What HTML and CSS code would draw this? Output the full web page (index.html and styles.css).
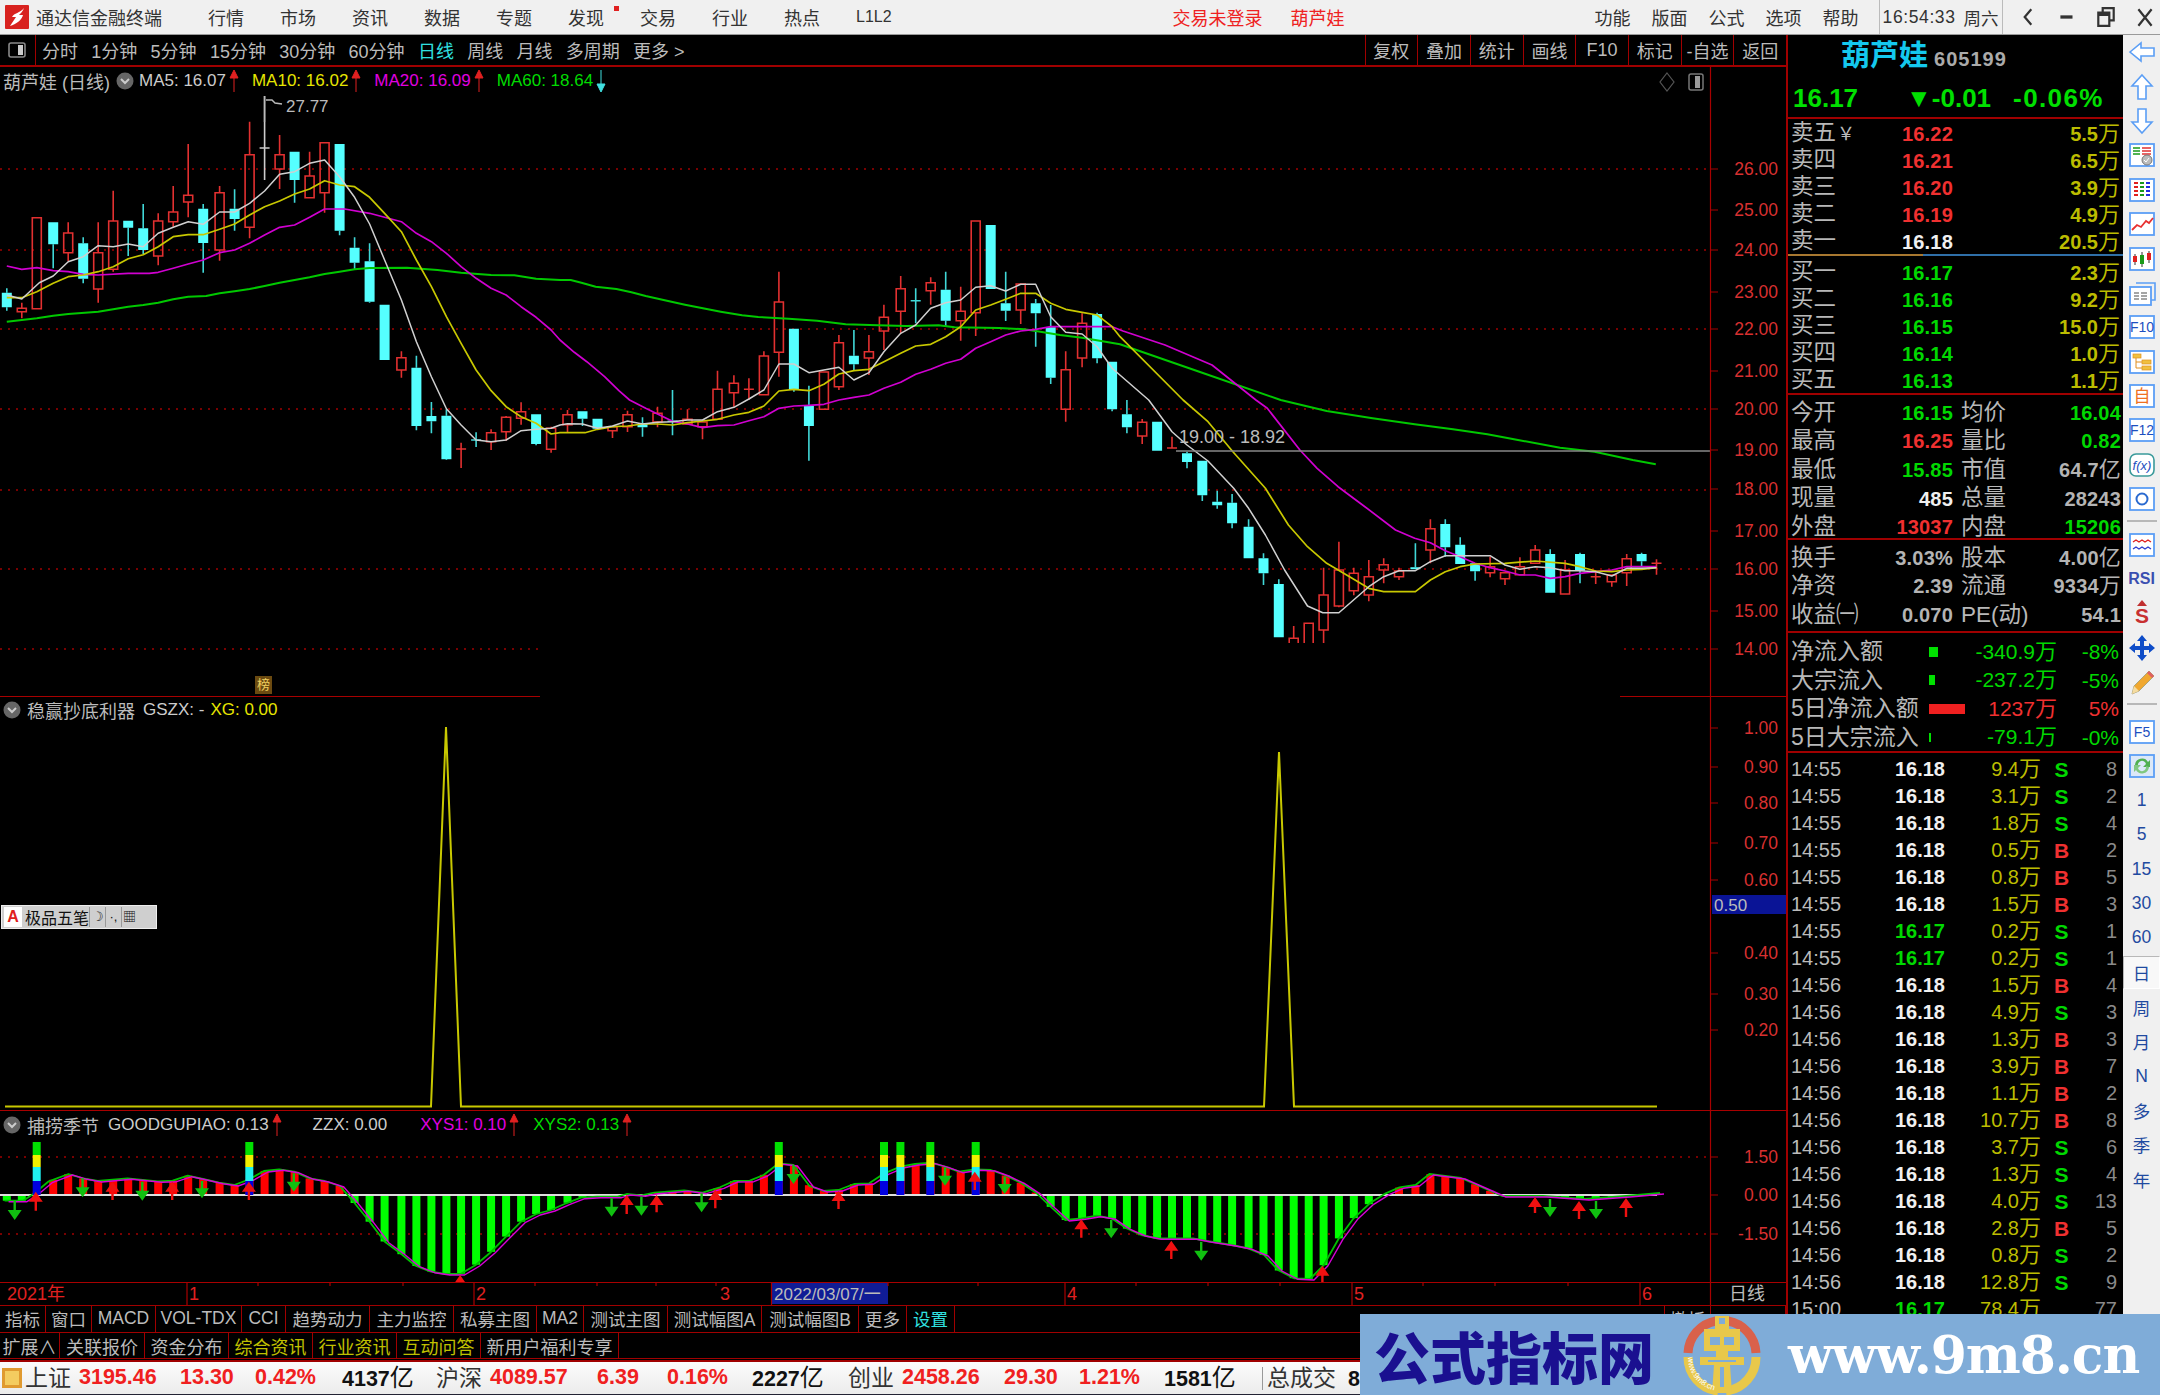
FILE: index.html
```html
<!DOCTYPE html>
<html lang="zh-CN">
<head>
<meta charset="utf-8">
<title>通达信金融终端</title>
<link rel="stylesheet" href="styles.css">
</head>
<body>
<div class="app">
  <header class="topbar">
    <svg class="logo" viewBox="0 0 24 24"><rect width="24" height="24" rx="1" fill="#d8221f"/><path d="M19 3 C15 8 9 8 7 12 L11 12 C9 15 7 18 5 21 C11 19 17 15 18 10 L14 10 C16 8 18 6 19 3Z" fill="#fff"/></svg>
    <span class="title">通达信金融终端</span>
    <nav class="nav">
      <span>行情</span><span>市场</span><span>资讯</span><span>数据</span><span>专题</span><span class="flag">发现</span><span>交易</span><span>行业</span><span>热点</span><span class="lvl">L1L2</span>
    </nav>
    <span class="login">交易未登录</span>
    <span class="login stock">葫芦娃</span>
    <nav class="nav-r">
      <span>功能</span><span>版面</span><span>公式</span><span>选项</span><span>帮助</span>
    </nav>
    <div class="clock"><span>16:54:33</span><span class="wk">周六</span></div>
    <div class="winbtns">
      <svg viewBox="0 0 20 20"><path d="M13 3 L7 10 L13 17" fill="none" stroke="#333" stroke-width="2"/></svg>
      <svg viewBox="0 0 20 20"><path d="M4 10 H15" stroke="#333" stroke-width="3"/></svg>
      <svg viewBox="0 0 20 20"><path d="M7 6 V2 H17 V13 H13 M3 6 H13 V18 H3 Z M3 8 H13" fill="none" stroke="#333" stroke-width="2"/></svg>
      <svg viewBox="0 0 20 20"><path d="M4 3 L16 18 M16 3 L4 18" stroke="#333" stroke-width="2"/></svg>
    </div>
  </header>

  <main class="main">
    <section class="left">
      <div class="toolbar">
        <div class="tool-icon"><svg viewBox="0 0 18 16"><rect x="1" y="1" width="16" height="14" rx="2" fill="none" stroke="#888" stroke-width="1.6"/><rect x="10" y="3" width="5" height="10" fill="#ccc"/></svg></div>
        <div class="periods">
          <span>分时</span><span>1分钟</span><span>5分钟</span><span>15分钟</span><span>30分钟</span><span>60分钟</span><span class="on">日线</span><span>周线</span><span>月线</span><span>多周期</span><span>更多 &gt;</span>
        </div>
        <div class="tools">
          <span>复权</span><span>叠加</span><span>统计</span><span>画线</span><span>F10</span><span>标记</span><span>-自选</span><span>返回</span>
        </div>
      </div>

      <div class="pane pane-k">
        <svg class="chart" viewBox="0 67 1786 630" width="1786" height="630">
          <path class="grid" d="M0 169H1710M0 250H1710M0 329H1710M0 409H1710M0 490H1710M0 569H1710M0 649H1710"/>
          <g id="candles"></g>
          <g id="mas"></g>
          <rect x="540" y="643" width="1080" height="54" fill="#000"/>
          <path d="M264.5 96 V122 M266 100 L272 100 L275 103 L282 104" fill="none" stroke="#bbb" stroke-width="1.4"/>
          <path d="M1176 451H1710" stroke="#888" stroke-width="1.5"/>
          <text class="t-grey" x="286" y="112">27.77</text>
          <text class="t-grey big" x="1179" y="443">19.00 - 18.92</text>
          <path class="axis" d="M1710.5 67V697M1711 169h7M1711 210h7M1711 250h7M1711 292h7M1711 329h7M1711 371h7M1711 409h7M1711 450h7M1711 489h7M1711 531h7M1711 569h7M1711 611h7M1711 649h7M0 696.5H540M1620 696.5H1786"/>
          <g class="t-axis">
            <text x="1778" y="175">26.00</text><text x="1778" y="216">25.00</text><text x="1778" y="256">24.00</text><text x="1778" y="298">23.00</text><text x="1778" y="335">22.00</text><text x="1778" y="377">21.00</text><text x="1778" y="415">20.00</text><text x="1778" y="456">19.00</text><text x="1778" y="495">18.00</text><text x="1778" y="537">17.00</text><text x="1778" y="575">16.00</text><text x="1778" y="617">15.00</text><text x="1778" y="655">14.00</text>
          </g>
        </svg>
        <div class="pane-head head-k">
          <span class="grey">葫芦娃 (日线)</span>
          <svg class="chev" viewBox="0 0 18 18"><circle cx="9" cy="9" r="8.5" fill="#666"/><path d="M5 7 L9 11 L13 7" fill="none" stroke="#ccc" stroke-width="2"/></svg>
          <span class="white">MA5: 16.07</span><svg class="ar" viewBox="0 0 10 24"><path d="M5 23V5M1 9L5 1L9 9Z" stroke="#e02020" fill="#e02020"/></svg>
          <span class="yellow">MA10: 16.02</span><svg class="ar" viewBox="0 0 10 24"><path d="M5 23V5M1 9L5 1L9 9Z" stroke="#e02020" fill="#e02020"/></svg>
          <span class="magenta">MA20: 16.09</span><svg class="ar" viewBox="0 0 10 24"><path d="M5 23V5M1 9L5 1L9 9Z" stroke="#e02020" fill="#e02020"/></svg>
          <span class="green">MA60: 18.64</span><svg class="ar" viewBox="0 0 10 24"><path d="M5 1V19M1 15L5 23L9 15Z" stroke="#40e0e0" fill="#40e0e0"/></svg>
        </div>
        <svg class="mini-ico" viewBox="0 0 50 20"><path d="M11 1 L18 10 L11 19 L4 10Z" fill="none" stroke="#555" stroke-width="1.2"/><rect x="33" y="2" width="14" height="16" rx="2" fill="none" stroke="#777" stroke-width="1.5"/><rect x="39" y="4" width="5" height="12" fill="#999"/></svg>
        <span class="rank">榜</span>
      </div>

      <div class="pane pane-g">
        <svg class="chart" viewBox="0 697 1786 414" width="1786" height="414">
          <path d="M5 1106.5H431L446 727L461 1106.5H1264L1279 752L1294 1106.5H1657" fill="none" stroke="#c8c800" stroke-width="2"/>
          <path class="axis" d="M1710.5 697V1111M1711 728h7M1711 767h7M1711 803h7M1711 843h7M1711 880h7M1711 953h7M1711 994h7M1711 1030h7M0 1110.5H1786"/>
          <g class="t-axis">
            <text x="1778" y="734">1.00</text><text x="1778" y="773">0.90</text><text x="1778" y="809">0.80</text><text x="1778" y="849">0.70</text><text x="1778" y="886">0.60</text><text x="1778" y="959">0.40</text><text x="1778" y="1000">0.30</text><text x="1778" y="1036">0.20</text>
          </g>
          <rect x="1712" y="895" width="74" height="19" fill="#0a1496"/>
          <text class="t-grey" x="1714" y="911">0.50</text>
        </svg>
        <div class="pane-head head-g">
          <svg class="chev" viewBox="0 0 18 18"><circle cx="9" cy="9" r="8.5" fill="#666"/><path d="M5 7 L9 11 L13 7" fill="none" stroke="#ccc" stroke-width="2"/></svg>
          <span class="grey">稳赢抄底利器</span>
          <span class="white">GSZX: -</span>
          <span class="yellow">XG: 0.00</span>
        </div>
        <div class="ime"><span class="ime-a">A</span><span class="ime-name">极品五笔</span><span class="ime-k">☽</span><span class="ime-k">·,</span><span class="ime-k">▦</span></div>
      </div>

      <div class="pane pane-m">
        <svg class="chart" viewBox="0 1111 1786 171" width="1786" height="171">
          <path class="grid" d="M0 1157H1710M0 1234H1710"/>
          <g id="macd"></g>
          <path d="M0 1195H1657" stroke="#ddd" stroke-width="2"/>
          <g id="macd-lines"></g>
          <g id="signals"></g>
          <path class="axis" d="M1710.5 1111V1282M1711 1157h7M1711 1195h7M1711 1234h7"/>
          <g class="t-axis">
            <text x="1778" y="1163">1.50</text><text x="1778" y="1201">0.00</text><text x="1778" y="1240">-1.50</text>
          </g>
        </svg>
        <div class="pane-head head-m">
          <svg class="chev" viewBox="0 0 18 18"><circle cx="9" cy="9" r="8.5" fill="#666"/><path d="M5 7 L9 11 L13 7" fill="none" stroke="#ccc" stroke-width="2"/></svg>
          <span class="grey">捕捞季节</span>
          <span class="white">GOODGUPIAO: 0.13</span><svg class="ar" viewBox="0 0 10 24"><path d="M5 23V5M1 9L5 1L9 9Z" stroke="#e02020" fill="#e02020"/></svg>
          <span class="white zzx">ZZX: 0.00</span>
          <span class="magenta xys">XYS1: 0.10</span><svg class="ar" viewBox="0 0 10 24"><path d="M5 23V5M1 9L5 1L9 9Z" stroke="#e02020" fill="#e02020"/></svg>
          <span class="green">XYS2: 0.13</span><svg class="ar" viewBox="0 0 10 24"><path d="M5 23V5M1 9L5 1L9 9Z" stroke="#e02020" fill="#e02020"/></svg>
        </div>
      </div>

      <svg class="dates" viewBox="0 1282 1786 23" width="1786" height="23">
        <rect x="772" y="1283" width="116" height="21" fill="#101c96"/>
        <path class="axis" d="M0 1282.5H1786M187 1282V1305M258 1283v3M330 1283v3M403 1283v3M474 1282V1305M535 1283v3M597 1283v3M656 1283v3M716 1283v3M771.5 1282V1305M888 1283v3M978 1283v3M1065 1282V1305M1136 1283v3M1208 1283v3M1280 1283v3M1352 1282V1305M1423 1283v3M1495 1283v3M1568 1283v3M1640 1282V1305M1710.5 1282V1305"/>
        <g class="t-date">
          <text x="7" y="1300">2021年</text><text x="189" y="1300">1</text><text x="476" y="1300">2</text><text x="720" y="1300">3</text><text x="1067" y="1300">4</text><text x="1354" y="1300">5</text><text x="1642" y="1300">6</text>
        </g>
        <text class="t-box" x="774" y="1300">2022/03/07/一</text>
        <text class="t-day" x="1729" y="1300">日线</text>
      </svg>

      <div class="tabs tabs-1">
        <span>指标</span><span>窗口</span><span>MACD</span><span>VOL-TDX</span><span>CCI</span><span>趋势动力</span><span>主力监控</span><span>私募主图</span><span>MA2</span><span>测试主图</span><span>测试幅图A</span><span>测试幅图B</span><span>更多</span><span class="cy">设置</span><span class="blank"></span><span>撤板</span><span></span>
      </div>
      <div class="tabs tabs-2">
        <span>扩展∧</span><span>关联报价</span><span>资金分布</span><span class="yl">综合资讯</span><span class="yl">行业资讯</span><span class="yl">互动问答</span><span>新用户福利专享</span>
      </div>
    </section>

    <aside class="panel">
      <div class="p-head">
        <div class="p-name"><span class="nm">葫芦娃</span><span class="code">605199</span></div>
        <div class="p-price"><span>16.17</span><span class="chg"><i class="tri">▼</i>-0.01</span><span class="pct">-0.06%</span></div>
      </div>
      <div class="book">
        <div class="b-row"><span class="lb">卖五<i class="yen">￥</i></span><b class="up">16.22</b><span class="vol">5.5<i>万</i></span></div>
        <div class="b-row"><span class="lb">卖四</span><b class="up">16.21</b><span class="vol">6.5<i>万</i></span></div>
        <div class="b-row"><span class="lb">卖三</span><b class="up">16.20</b><span class="vol">3.9<i>万</i></span></div>
        <div class="b-row"><span class="lb">卖二</span><b class="up">16.19</b><span class="vol">4.9<i>万</i></span></div>
        <div class="b-row"><span class="lb">卖一</span><b class="wh">16.18</b><span class="vol">20.5<i>万</i></span></div>
        <div class="b-sep"><span></span><span></span></div>
        <div class="b-row"><span class="lb">买一</span><b class="dn">16.17</b><span class="vol">2.3<i>万</i></span></div>
        <div class="b-row"><span class="lb">买二</span><b class="dn">16.16</b><span class="vol">9.2<i>万</i></span></div>
        <div class="b-row"><span class="lb">买三</span><b class="dn">16.15</b><span class="vol">15.0<i>万</i></span></div>
        <div class="b-row"><span class="lb">买四</span><b class="dn">16.14</b><span class="vol">1.0<i>万</i></span></div>
        <div class="b-row"><span class="lb">买五</span><b class="dn">16.13</b><span class="vol">1.1<i>万</i></span></div>
      </div>
      <div class="stats s-a">
        <div class="s-row"><span class="lb">今开</span><b class="dn">16.15</b><span class="lb">均价</span><b class="dn">16.04</b></div>
        <div class="s-row"><span class="lb">最高</span><b class="up">16.25</b><span class="lb">量比</span><b class="dn">0.82</b></div>
        <div class="s-row"><span class="lb">最低</span><b class="dn">15.85</b><span class="lb">市值</span><b class="gy">64.7<i>亿</i></b></div>
        <div class="s-row"><span class="lb">现量</span><b class="wh">485</b><span class="lb">总量</span><b class="gy">28243</b></div>
        <div class="s-row"><span class="lb">外盘</span><b class="up">13037</b><span class="lb">内盘</span><b class="dn">15206</b></div>
      </div>
      <div class="stats s-b">
        <div class="s-row"><span class="lb">换手</span><b class="gy">3.03%</b><span class="lb">股本</span><b class="gy">4.00<i>亿</i></b></div>
        <div class="s-row"><span class="lb">净资</span><b class="gy">2.39</b><span class="lb">流通</span><b class="gy">9334<i>万</i></b></div>
        <div class="s-row"><span class="lb">收益㈠</span><b class="gy">0.070</b><span class="lb">PE(动)</span><b class="gy">54.1</b></div>
      </div>
      <div class="flows">
        <div class="f-row"><span class="lb">净流入额</span><span class="bar"><u class="b-g b1"></u></span><span class="dn">-340.9<i>万</i></span><span class="dn">-8%</span></div>
        <div class="f-row"><span class="lb">大宗流入</span><span class="bar"><u class="b-g b2"></u></span><span class="dn">-237.2<i>万</i></span><span class="dn">-5%</span></div>
        <div class="f-row"><span class="lb">5日净流入额</span><span class="bar"><u class="b-r b3"></u></span><span class="up">1237<i>万</i></span><span class="up">5%</span></div>
        <div class="f-row"><span class="lb">5日大宗流入</span><span class="bar"><u class="b-g b4"></u></span><span class="dn">-79.1<i>万</i></span><span class="dn">-0%</span></div>
      </div>
      <div class="ticks">
        <div class="t-row"><span>14:55</span><b class="wh">16.18</b><span class="vol">9.4<i>万</i></span><b class="dn">S</b><span class="n">8</span></div>
        <div class="t-row"><span>14:55</span><b class="wh">16.18</b><span class="vol">3.1<i>万</i></span><b class="dn">S</b><span class="n">2</span></div>
        <div class="t-row"><span>14:55</span><b class="wh">16.18</b><span class="vol">1.8<i>万</i></span><b class="dn">S</b><span class="n">4</span></div>
        <div class="t-row"><span>14:55</span><b class="wh">16.18</b><span class="vol">0.5<i>万</i></span><b class="up">B</b><span class="n">2</span></div>
        <div class="t-row"><span>14:55</span><b class="wh">16.18</b><span class="vol">0.8<i>万</i></span><b class="up">B</b><span class="n">5</span></div>
        <div class="t-row"><span>14:55</span><b class="wh">16.18</b><span class="vol">1.5<i>万</i></span><b class="up">B</b><span class="n">3</span></div>
        <div class="t-row"><span>14:55</span><b class="dn">16.17</b><span class="vol">0.2<i>万</i></span><b class="dn">S</b><span class="n">1</span></div>
        <div class="t-row"><span>14:55</span><b class="dn">16.17</b><span class="vol">0.2<i>万</i></span><b class="dn">S</b><span class="n">1</span></div>
        <div class="t-row"><span>14:56</span><b class="wh">16.18</b><span class="vol">1.5<i>万</i></span><b class="up">B</b><span class="n">4</span></div>
        <div class="t-row"><span>14:56</span><b class="wh">16.18</b><span class="vol">4.9<i>万</i></span><b class="dn">S</b><span class="n">3</span></div>
        <div class="t-row"><span>14:56</span><b class="wh">16.18</b><span class="vol">1.3<i>万</i></span><b class="up">B</b><span class="n">3</span></div>
        <div class="t-row"><span>14:56</span><b class="wh">16.18</b><span class="vol">3.9<i>万</i></span><b class="up">B</b><span class="n">7</span></div>
        <div class="t-row"><span>14:56</span><b class="wh">16.18</b><span class="vol">1.1<i>万</i></span><b class="up">B</b><span class="n">2</span></div>
        <div class="t-row"><span>14:56</span><b class="wh">16.18</b><span class="vol">10.7<i>万</i></span><b class="up">B</b><span class="n">8</span></div>
        <div class="t-row"><span>14:56</span><b class="wh">16.18</b><span class="vol">3.7<i>万</i></span><b class="dn">S</b><span class="n">6</span></div>
        <div class="t-row"><span>14:56</span><b class="wh">16.18</b><span class="vol">1.3<i>万</i></span><b class="dn">S</b><span class="n">4</span></div>
        <div class="t-row"><span>14:56</span><b class="wh">16.18</b><span class="vol">4.0<i>万</i></span><b class="dn">S</b><span class="n">13</span></div>
        <div class="t-row"><span>14:56</span><b class="wh">16.18</b><span class="vol">2.8<i>万</i></span><b class="up">B</b><span class="n">5</span></div>
        <div class="t-row"><span>14:56</span><b class="wh">16.18</b><span class="vol">0.8<i>万</i></span><b class="dn">S</b><span class="n">2</span></div>
        <div class="t-row"><span>14:56</span><b class="wh">16.18</b><span class="vol">12.8<i>万</i></span><b class="dn">S</b><span class="n">9</span></div>
        <div class="t-row"><span>15:00</span><b class="dn">16.17</b><span class="vol">78.4<i>万</i></span><b></b><span class="n">77</span></div>
      </div>
    </aside>

    <nav class="rail">
      <div class="ri"><svg viewBox="0 0 30 30"><path d="M3 15L14 6V11H27V19H14V24Z" fill="#fff" stroke="#5b9ef5" stroke-width="1.6"/></svg></div>
      <div class="ri"><svg viewBox="0 0 30 30"><path d="M15 3L25 14H19V27H11V14H5Z" fill="#fff" stroke="#5b9ef5" stroke-width="1.6"/></svg></div>
      <div class="ri"><svg viewBox="0 0 30 30"><path d="M15 27L25 16H19V3H11V16H5Z" fill="#fff" stroke="#5b9ef5" stroke-width="1.6"/></svg></div>
      <div class="ri"><svg viewBox="0 0 30 30"><rect class="bx" x="3" y="4" width="24" height="22"/><path d="M6 8h7M6 11h7M6 14h7" stroke="#1a9a1a" stroke-width="1.6"/><path d="M15 8h9M15 11h9M15 14h9" stroke="#e03030" stroke-width="1.6"/><circle cx="20" cy="20" r="5" fill="#bbb" stroke="#777"/><path d="M17 20l2 2 3-4" fill="none" stroke="#fff"/></svg></div>
      <div class="ri"><svg viewBox="0 0 30 30"><rect class="bx" x="3" y="4" width="24" height="22"/><path d="M7 8h4M7 12h4M7 16h4M7 20h4" stroke="#e02020" stroke-width="2"/><path d="M13 8h4M13 12h4M13 16h4M13 20h4" stroke="#1a9a1a" stroke-width="2"/><path d="M19 8h4M19 12h4M19 16h4M19 20h4" stroke="#2030e0" stroke-width="2"/></svg></div>
      <div class="ri"><svg viewBox="0 0 30 30"><rect class="bx" x="3" y="4" width="24" height="22"/><path d="M5 21L10 16L14 18L19 12L22 14L26 9" fill="none" stroke="#e83030" stroke-width="1.8"/></svg></div>
      <div class="ri"><svg viewBox="0 0 30 30"><rect class="bx" x="3" y="4" width="24" height="22"/><path d="M8 10V21M15 8V23M22 7V19" stroke="#333"/><rect x="6" y="12" width="4" height="6" fill="#e02020"/><rect x="13" y="11" width="4" height="9" fill="#1a9a1a"/><rect x="20" y="9" width="4" height="7" fill="#e02020"/></svg></div>
      <div class="ri"><svg viewBox="0 0 30 30"><path d="M9 5H28V22H24" fill="none" stroke="#5b9ef5" stroke-width="1.6"/><rect class="bx" x="3" y="9" width="21" height="18"/><path d="M7 15h5M14 15h6M7 18h5M14 18h6M7 21h5M14 21h6" stroke="#888" stroke-width="1.4"/></svg></div>
      <div class="ri"><svg viewBox="0 0 30 30"><rect class="bx" x="3" y="4" width="24" height="22"/><text class="ic-t" x="15" y="20">F10</text></svg></div>
      <div class="ri"><svg viewBox="0 0 30 30"><rect class="bx" x="3" y="4" width="24" height="22"/><rect x="6" y="7" width="8" height="4" fill="#f0c040" stroke="#e09020" stroke-width=".7"/><rect x="15" y="13" width="9" height="4" fill="#f0c040" stroke="#e09020" stroke-width=".7"/><rect x="15" y="19" width="9" height="4" fill="#f0c040" stroke="#e09020" stroke-width=".7"/><path d="M9 11V21H15M9 15H15" fill="none" stroke="#e09020"/></svg></div>
      <div class="ri"><svg viewBox="0 0 30 30"><rect class="bx" x="3" y="4" width="24" height="22"/><text class="ic-t ic-o" x="15" y="21">自</text></svg></div>
      <div class="ri"><svg viewBox="0 0 30 30"><rect class="bx" x="3" y="4" width="24" height="22"/><text class="ic-t" x="15" y="20">F12</text></svg></div>
      <div class="ri"><svg viewBox="0 0 30 30"><rect x="3" y="4" width="24" height="22" rx="6" fill="#fff" stroke="#3a9a9a" stroke-width="1.6"/><text class="ic-t ic-f" x="15" y="20">f(x)</text></svg></div>
      <div class="ri"><svg viewBox="0 0 30 30"><rect class="bx" x="3" y="4" width="24" height="22"/><circle cx="15" cy="15" r="5.5" fill="none" stroke="#2a6ad0" stroke-width="2"/></svg></div>
      <div class="rs"></div>
      <div class="ri"><svg viewBox="0 0 30 30"><rect class="bx" x="3" y="4" width="24" height="22"/><path d="M6 12l3-2 3 2 3-2 3 2 3-2 3 2" fill="none" stroke="#e02020" stroke-width="1.4"/><path d="M6 19l3-2 3 2 3-2 3 2 3-2 3 2" fill="none" stroke="#3040d0" stroke-width="1.4"/></svg></div>
      <div class="ri"><span class="rsi">RSI</span></div>
      <div class="ri"><svg viewBox="0 0 30 30"><path d="M15 2L20 8H10Z" fill="#c03030"/><text class="ic-s" x="15" y="25">S</text></svg></div>
      <div class="ri"><svg viewBox="0 0 30 30"><path d="M15 2L20 8H17V13H22V10L28 15L22 20V17H17V22H20L15 28L10 22H13V17H8V20L2 15L8 10V13H13V8H10Z" fill="#0e4cc8"/></svg></div>
      <div class="ri"><svg viewBox="0 0 30 30"><path d="M5 27L7 19L22 4L27 9L12 24Z" fill="#f0a830" stroke="#997" stroke-width=".8"/><path d="M5 27L7 19L12 24Z" fill="#f5dca0"/><path d="M22 4L27 9L25 11L20 6Z" fill="#e06060"/></svg></div>
      <div class="rs rs-b"></div>
      <div class="ri"><svg viewBox="0 0 30 30"><rect class="bx" x="3" y="4" width="24" height="22"/><text class="ic-t" x="15" y="20">F5</text></svg></div>
      <div class="ri"><svg viewBox="0 0 30 30"><rect class="bx bx-l" x="3" y="4" width="24" height="22"/><path d="M8 14A7 7 0 0 1 21 11L23 9V16H16L19 13A4 4 0 0 0 11 15Z" fill="#50b050"/><path d="M22 16A7 7 0 0 1 9 19L7 21V14H14L11 17A4 4 0 0 0 19 15Z" fill="#80c880"/></svg></div>
      <div class="ri tx">1</div><div class="ri tx">5</div><div class="ri tx">15</div><div class="ri tx">30</div><div class="ri tx">60</div>
      <div class="ri tx sel">日</div><div class="ri tx">周</div><div class="ri tx">月</div><div class="ri tx">N</div><div class="ri tx">多</div><div class="ri tx">季</div><div class="ri tx">年</div>
    </nav>
  </main>

  <footer class="status">
    <span class="st-ico"></span>
    <span class="dk lbl">上证</span><b class="r">3195.46</b><b class="r">13.30</b><b class="r">0.42%</b><b class="k">4137<i>亿</i></b>
    <span class="dk lbl">沪深</span><b class="r">4089.57</b><b class="r">6.39</b><b class="r">0.16%</b><b class="k">2227<i>亿</i></b>
    <span class="dk lbl">创业</span><b class="r">2458.26</b><b class="r">29.30</b><b class="r">1.21%</b><b class="k">1581<i>亿</i></b>
    <span class="dk lbl sep">总成交</span><b class="k">8917<i>亿</i></b>
  </footer>

  <aside class="mark">
    <span class="mark-cn">公式指标网</span>
    <svg class="mark-logo" viewBox="0 0 80 80">
      <path d="M34 6A34 34 0 0 0 6 38" fill="none" stroke="#d9614b" stroke-width="9"/>
      <path d="M46 6A34 34 0 0 1 74 38" fill="none" stroke="#d9614b" stroke-width="9"/>
      <path id="arcb" d="M6 42A34 34 0 0 0 36 76" fill="none" stroke="#e8c84a" stroke-width="9"/>
      <path d="M74 42A34 34 0 0 1 44 76" fill="none" stroke="#e8c84a" stroke-width="9"/>
      <path d="M33 1H47V14H58V36H46V42H62V50H48L50 78H30L32 50H18V42H34V36H22V14H33Z" fill="#e8c84a"/>
      <path d="M37 3H43V9H37ZM28 22H38V30H28ZM42 22H52V30H42ZM26 45H54V47H26ZM38 52H42V72H38Z" fill="#7facd8"/>
      <text class="mark-small"><textPath href="#arcb">www.9m8.cn</textPath></text>
    </svg>
    <span class="mark-url">www.9m8.cn</span>
  </aside>
</div>
<script src="chart.js"></script>
</body>
</html>
```

FILE: styles.css
```css
* { box-sizing: border-box; }
html, body { margin: 0; padding: 0; background: #000; }
body { font-family: "Liberation Sans", "Noto Sans CJK SC", sans-serif; }
i { font-style: normal; }
u { text-decoration: none; }
.app { position: relative; width: 2160px; height: 1395px; overflow: hidden; display: flex; flex-direction: column; }

/* top bar */
.topbar { flex: 0 0 35px; background: #f0f0f0; border-bottom: 1px solid #9a9a9a; display: flex; align-items: center; font-size: 18px; color: #333; }
.logo { width: 24px; height: 24px; margin-left: 5px; }
.title { margin-left: 7px; width: 126px; white-space: nowrap; }
.nav { margin-left: 46px; display: flex; gap: 36px; align-items: center; }
.flag { position: relative; }
.flag::after { content: ""; position: absolute; left: 46px; top: 2px; width: 5px; height: 5px; background: #e02020; }
.lvl { font-size: 16px; }
.login { color: #ee2222; margin-left: 281px; white-space: nowrap; }
.login.stock { margin-left: 28px; }
.nav-r { margin-left: 250px; display: flex; gap: 21px; }
.clock { margin-left: 20px; height: 34px; border-left: 1px solid #bbb; border-right: 1px solid #bbb; width: 124px; display: flex; align-items: center; padding-left: 3px; font-size: 17.5px; letter-spacing: .6px; white-space: nowrap; }
.wk { margin-left: 8px; letter-spacing: 0; }
.winbtns { display: flex; margin-left: 14px; gap: 17px; }
.winbtns svg { width: 22px; height: 22px; }

/* main */
.main { flex: 0 0 1325px; display: grid; grid-template-columns: 1786px 337px 37px; background: #000; }
.left { display: flex; flex-direction: column; min-width: 0; }

/* period toolbar */
.toolbar { height: 32px; flex: none; display: flex; border-bottom: 2px solid #a00000; color: #bbb; font-size: 18px; }
.tool-icon { width: 36px; border-right: 1px solid #a00000; display: flex; align-items: center; justify-content: center; padding-right: 2px; }
.tool-icon svg { width: 18px; height: 16px; }
.periods { display: flex; gap: 13.3px; margin-left: 6px; align-items: center; white-space: nowrap; }
.periods .on { color: #30e0e0; }
.tools { margin-left: auto; display: flex; }
.tools span { width: 52.7px; border-left: 1px solid #a00000; display: flex; align-items: center; justify-content: center; white-space: nowrap; }

/* panes */
.pane { position: relative; flex: none; }
.chart { display: block; }
.pane-k { height: 630px; }
.pane-g { height: 414px; }
.pane-m { height: 171px; }
.pane-head { position: absolute; left: 0; display: flex; align-items: center; font-size: 17px; white-space: nowrap; }
.head-k { top: 0; height: 28px; left: 3px; }
.head-g { top: 0; height: 26px; left: 3px; }
.head-m { top: 0; height: 28px; left: 3px; }
.grey { color: #bbb; font-size: 18px; }
.white { color: #ccc; }
.yellow { color: #e6e600; }
.magenta { color: #e000e0; }
.green { color: #00dc00; }
.chev { width: 18px; height: 18px; margin: 0 5px 0 6px; flex: none; }
.head-g .chev, .head-m .chev { margin-left: 0; margin-right: 6px; }
.head-g .white { margin-left: 8px; }
.head-g .yellow { margin-left: 6px; }
.head-m .white { margin-left: 9px; }
.head-m .zzx { margin-left: 22px; }
.head-m .xys { margin-left: 33px; }
.head-m .green { margin-left: 5px; }
.ar { width: 10px; height: 24px; margin: 0 9px 0 3px; flex: none; }
.head-k .ar { margin: 0 13px 0 3px; }
.mini-ico { position: absolute; left: 1656px; top: 5px; width: 50px; height: 20px; }
.rank { position: absolute; left: 255px; top: 609px; width: 17px; height: 18px; background: #6b4a10; color: #f0d060; font-size: 13px; line-height: 18px; text-align: center; }
.ime { position: absolute; left: 1px; top: 208px; width: 156px; height: 24px; background: #cfcfcf; border: 1px solid #eee; display: flex; align-items: center; font-size: 16px; color: #111; }
.ime-a { width: 18px; height: 20px; margin-left: 2px; background: #fff; color: #e02020; font-weight: bold; text-align: center; line-height: 20px; }
.ime-name { margin-left: 3px; white-space: nowrap; }
.ime-k { width: 16px; text-align: center; border-left: 1px solid #999; font-size: 13px; line-height: 20px; }

/* svg chart styling */
.grid { stroke: #a00000; stroke-width: 1.4; stroke-dasharray: 2 6; fill: none; }
.axis { stroke: #a80000; stroke-width: 1.2; fill: none; }
.t-axis text { font-size: 17.5px; fill: #d83030; text-anchor: end; }
.t-grey { font-size: 17px; fill: #bbb; }
.t-grey.big { font-size: 18px; }
.dates { display: block; flex: none; }
.t-date text { font-size: 18px; fill: #e02020; }
.t-box { font-size: 17px; fill: #bbb; }
.t-day { font-size: 18px; fill: #bbb; }

/* bottom tabs */
.tabs { display: grid; flex: none; font-size: 18px; color: #bbb; border-top: 1px solid #a00000; height: 26.5px; }
.tabs span { display: flex; align-items: center; justify-content: center; border-right: 1px solid #a00000; white-space: nowrap; }
.tabs .blank { border-right-color: #a00000; }
.tabs-1 { grid-template-columns: 46px 46px 64px 86px 44px 84px 84px 83px 47px 84px 94px 97px 48px 48px 710px 46px 75px; font-size: 17.5px; }
.tabs-2 { grid-template-columns: 60px 85px 84px 84px 84px 84px 138px; border-bottom: 1px solid #a00000; height: 27.5px; }
.tabs .cy { color: #30e0e0; }
.tabs .yl { color: #c0c000; }

/* right panel */
.panel { border-left: 2px solid #a00000; overflow: hidden; color: #bbb; font-size: 20px; background: #000; }
.panel i { font-weight: normal; font-size: 22px; line-height: 1; }
.lb { color: #b8b8b8; font-size: 22.5px; line-height: 1; font-weight: normal; white-space: nowrap; }
.up { color: #f03030; }
.dn { color: #00d800; }
.wh { color: #f0f0f0; }
.gy { color: #b4b4b4; }
.p-head { height: 84px; border-bottom: 2px solid #a00000; }
.p-name { height: 41px; display: flex; align-items: baseline; padding: 3px 0 0 53px; white-space: nowrap; }
.nm { font-size: 29px; font-weight: bold; color: #14c8ee; line-height: 36px; }
.code { font-size: 20px; font-weight: bold; color: #aaa; margin-left: 6px; letter-spacing: 1px; }
.p-price { display: flex; align-items: center; height: 41px; color: #00e000; font-weight: bold; font-size: 26px; padding: 3px 0 0 5px; white-space: nowrap; }
.chg { margin-left: 48px; }
.panel .tri { font-size: 26px; font-weight: bold; }
.pct { margin-left: 22px; letter-spacing: 1.4px; }
.book { height: 276px; border-bottom: 2px solid #a00000; }
.b-row { height: 27px; display: grid; grid-template-columns: 110px 52px 167px; align-items: center; padding: 2px 0 0 3px; line-height: 1; }
.b-row b { text-align: right; letter-spacing: .2px; }
.b-row .vol { text-align: right; font-weight: bold; color: #bcbc00; }
.vol { color: #bcbc00; }
.vol i { color: #bcbc00; }
.yen { font-size: 18px !important; color: #bbb; margin-left: 1px; }
.b-sep { height: 2px; margin-bottom: 2px; display: grid; grid-template-columns: 135px 1fr; }
.b-sep span:first-child { background: #a87830; }
.b-sep span:last-child { background: #2f6fa8; }
.stats { border-bottom: 2px solid #a00000; }
.s-a { height: 145px; padding-top: 1px; }
.s-b { height: 93px; padding-top: 1px; }
.s-row { height: 28.6px; display: grid; grid-template-columns: 110px 52px 8px 80px 80px; align-items: center; padding: 5px 0 0 3px; line-height: 1; }
.s-row b { justify-self: end; white-space: nowrap; letter-spacing: .2px; }
.s-row .lb:nth-of-type(2) { grid-column: 4; }
.s-row b:last-child { grid-column: 5; }
.flows { height: 120px; border-bottom: 2px solid #a00000; padding-top: 2px; }
.f-row { height: 28.5px; display: grid; grid-template-columns: 138px 45px 83px 62px; align-items: center; padding: 5px 0 0 3px; white-space: nowrap; font-size: 21px; line-height: 1; }
.f-row > span:nth-child(3), .f-row > span:nth-child(4) { text-align: right; }
.f-row .lb { font-size: 23px; overflow: visible; }
.bar { display: flex; align-items: center; height: 100%; }
.b-g { background: #00e000; display: block; }
.b-r { background: #f02020; display: block; }
.b1 { width: 9px; height: 10px; }
.b2 { width: 6px; height: 10px; }
.b3 { width: 36px; height: 10px; }
.b4 { width: 2px; height: 9px; }
.ticks { font-size: 20px; }
.t-row { height: 27px; display: grid; grid-template-columns: 60px 94px 96px 30px 46px; align-items: center; padding: 5px 0 0 3px; color: #bbb; line-height: 1; }
.t-row b { text-align: right; }
.t-row b:nth-of-type(1) { font-weight: bold; }
.t-row .vol { text-align: right; }
.t-row b:nth-of-type(2) { text-align: center; font-size: 21px; padding-left: 11px; }
.t-row .n { text-align: right; color: #8a8a8a; }

/* right rail */
.rail { background: #f0f0f0; display: flex; flex-direction: column; align-items: center; }
.ri { height: 34.4px; width: 37px; flex: none; display: flex; align-items: center; justify-content: center; }
.ri svg { width: 30px; height: 30px; }
.bx { fill: #fff; stroke: #5b9ef5; stroke-width: 1.8; }
.bx-l { fill: #dce8f8; }
.rs { flex: none; height: 11px; width: 30px; display: flex; }
.rs-b { height: 15px; }
.rs::after { content: ""; width: 100%; height: 2px; margin-top: 4px; background: #b8b8b8; }
.ic-t { font-size: 14px; text-anchor: middle; fill: #1d4fc0; font-family: "Liberation Sans", sans-serif; }
.ic-o { fill: #f07020; font-size: 17px; font-family: "Noto Sans CJK SC", sans-serif; }
.ic-f { fill: #1d4fc0; font-style: italic; font-size: 13px; }
.ic-s { font-size: 21px; font-weight: bold; text-anchor: middle; fill: #c83030; font-family: "Liberation Sans", sans-serif; }
.rsi { font-weight: bold; font-size: 16px; color: #3a4fb0; }
.tx { color: #1f4aa0; font-size: 17.5px; }
.sel { background: #f8f8f8; border: 1px solid #b8b8b8; border-right-color: #fff; border-bottom-color: #fff; height: 33px; margin: 1px 0; }

/* status bar */
.status { flex: 0 0 35px; background: linear-gradient(#fcfcfc, #ececec); border-top: 2px solid #a00000; border-bottom: 1px solid #223; display: grid; grid-template-columns: 25px 54px 101px 75px 87px 94px 54px 107px 70px 85px 96px 54px 102px 75px 85px 98px 86px 1fr; align-items: center; font-size: 21.5px; line-height: 1; white-space: nowrap; }
.status i { font-weight: normal; font-size: 24px; line-height: 1; }
.st-ico { width: 20px; height: 20px; margin-left: 2px; background: #f4cc60; border: 3px solid #e09a30; }
.lbl { font-size: 23px; color: #333; }
.sep { border-left: 1px solid #999; padding-left: 4px; }
.r { color: #f02020; }
.k { color: #111; }

/* watermark */
.mark { position: absolute; left: 1360px; top: 1314px; width: 800px; height: 81px; background: #7facd8; display: flex; align-items: center; }
.mark-cn { font-family: "Noto Sans CJK SC", sans-serif; font-weight: 900; font-size: 56px; color: #1a1090; margin-left: 14px; width: 290px; white-space: nowrap; }
.mark-logo { width: 80px; height: 80px; margin-left: 18px; flex: none; }
.mark-small { font-size: 8px; fill: #fff; font-family: "Liberation Sans", sans-serif; }
.mark-url { font-family: "DejaVu Serif", serif; font-weight: bold; font-size: 52px; color: #fff; margin-left: 26px; white-space: nowrap; letter-spacing: -1.1px; }
```

FILE: chart.js
```js
(function () {
  var NS = 'http://www.w3.org/2000/svg';
  function add(parent, tag, attrs) {
    var e = document.createElementNS(NS, tag);
    for (var k in attrs) e.setAttribute(k, attrs[k]);
    parent.appendChild(e);
    return e;
  }
  // map measured coordinates to page pixels
  var A = function (x, y) { return [x / 2.8, 120 + y / 3]; };
  var B = function (x, y) { return [560 + x / 2.8, 220 + y / 3]; };
  var C = function (x, y) { return [1120 + x / 2.613, 400 + y / 3]; };
  var M1 = function (x, y) { return [x / 2.178, 1110 + y / 3]; };
  var M2 = function (x, y) { return [720 + x / 2.178, 1110 + y / 3]; };
  var R = function (x, y) { return [x, y]; };

  // [x, type, wickTop, bodyTop, bodyBottom, wickBottom]
  var cA = [
    [19,'c',505,518,562,572],[61,'r',548,565,575,595],[103,'r',293,293,566,566],[149,'c',307,307,373,445],
    [191,'r',307,339,398,423],[233,'c',352,370,476,490],[275,'r',307,398,507,548],[317,'r',212,303,448,455],
    [359,'c',302,302,323,408],[401,'c',252,325,390,402],[443,'r',280,303,408,436],[485,'r',198,276,305,320],
    [527,'r',72,226,246,292],[569,'c',252,266,369,458],[615,'r',198,218,390,422],[657,'c',208,266,297,332],
    [699,'r',5,104,322,355],[741,'w',-72,84,84,180],[783,'r',45,104,147,207],[825,'c',95,95,180,248],
    [867,'r',95,168,233,233],[909,'r',68,68,218,278],[951,'c',72,72,332,346],[993,'c',352,383,428,447],
    [1035,'c',370,424,545,548],[1077,'c',554,554,720,720],[1124,'r',694,713,750,773],[1166,'c',707,743,918,931],
    [1208,'c',846,888,904,940],[1250,'c',868,887,1018,1020],[1291,'r',968,987,987,1044],[1333,'c',937,960,960,981],
    [1375,'r',928,938,965,990],[1417,'r',888,892,935,962],[1459,'r',847,875,895,914],[1501,'c',883,883,972,976],
    [1543,'r',920,925,988,998]
  ];
  var cB = [
    [21,'r',570,584,614,638],[63,'c',574,574,596,618],[105,'c',596,596,626,626],[147,'r',620,620,632,654],
    [189,'r',572,584,620,636],[231,'c',592,612,622,650],[273,'r',560,580,606,622],[315,'c',510,604,604,646],
    [357,'r',568,598,612,612],[399,'r',606,606,620,658],[441,'r',452,508,598,598],[487,'r',466,490,518,560],
    [529,'r',475,508,508,540],[571,'r',394,408,524,524],[613,'r',155,246,397,470],[655,'c',326,326,508,515],
    [697,'c',497,558,618,722],[739,'r',456,456,568,568],[781,'r',345,368,500,510],[823,'c',330,407,433,452],
    [865,'r',345,395,414,465],[907,'r',254,292,333,390],[954,'r',168,206,274,340],[996,'c',205,242,242,310],
    [1038,'r',172,188,212,254],[1080,'c',155,209,302,320],[1122,'r',200,274,302,362],[1164,'r',3,3,278,348],
    [1206,'c',15,15,207,207],[1248,'c',155,250,272,303],[1290,'r',192,192,270,312],[1332,'c',237,250,280,380],
    [1374,'c',255,322,473,492],[1416,'r',394,449,568,605],[1462,'r',280,310,414,442],[1504,'c',278,282,415,430],
    [1546,'c',425,425,568,574]
  ];
  var cC = [
    [18,'c',0,43,82,100],[58,'r',57,67,108,132],[97,'c',65,65,152,152],[136,'r',110,144,144,144],
    [175,'c',155,160,186,205],[215,'c',182,182,286,303],[254,'c',272,305,316,326],[293,'c',282,308,370,385],
    [336,'c',358,380,475,475],[375,'c',460,475,520,555],[415,'c',538,552,712,712],[454,'r',678,715,760,760],
    [493,'r',670,670,760,760],[532,'r',503,585,690,760],[572,'r',425,510,618,622],[611,'r',503,520,572,586],
    [650,'r',480,530,585,604],[689,'r',475,494,510,550],[729,'r',503,513,530,540],[772,'c',430,502,508,508],
    [811,'r',358,386,450,490],[850,'c',358,372,442,470],[889,'c',412,434,492,492],[928,'c',490,490,514,542],
    [967,'r',470,500,518,532],[1006,'r',518,518,536,555],[1045,'r',472,500,524,524],[1085,'r',435,450,490,490],
    [1124,'c',448,462,578,578],[1163,'r',480,510,582,582],[1202,'c',458,462,512,550],[1243,'r',510,530,530,552],
    [1285,'r',525,525,545,560],[1324,'r',462,476,518,558],[1363,'c',458,462,484,498],[1402,'r',478,490,490,524]
  ];

  var paths = { r: '', cw: '', cb: '', w: '' };
  var xs = [];
  function addCandles(list, map) {
    list.forEach(function (c) {
      var x = map(c[0], 0)[0];
      var wt = map(0, c[2])[1], bt = map(0, c[3])[1], bb = map(0, c[4])[1], wb = map(0, c[5])[1];
      var t = c[1];
      xs.push(x);
      var f = function (n) { return n.toFixed(1); };
      var wick = 'M' + f(x) + ' ' + f(wt) + 'V' + f(bt) + 'M' + f(x) + ' ' + f(bb) + 'V' + f(wb);
      if (bb - bt < 1) {
        var cross = 'M' + f(x) + ' ' + f(wt) + 'V' + f(wb) + 'M' + f(x - 5) + ' ' + f(bt) + 'H' + f(x + 5);
        if (t === 'r') paths.r += cross;
        else if (t === 'w') paths.w += cross;
        else paths.cw += cross;
        return;
      }
      if (t === 'r') {
        paths.r += wick + 'M' + f(x - 4.5) + ' ' + f(bt) + 'H' + f(x + 4.5) + 'V' + f(bb) + 'H' + f(x - 4.5) + 'Z';
      } else {
        paths.cw += wick;
        paths.cb += 'M' + f(x - 5) + ' ' + f(bt) + 'H' + f(x + 5) + 'V' + f(bb) + 'H' + f(x - 5) + 'Z';
      }
    });
  }
  addCandles(cA, A); addCandles(cB, B); addCandles(cC, C);

  var gc = document.getElementById('candles');
  add(gc, 'path', { d: paths.r, fill: 'none', stroke: '#e23030', 'stroke-width': 1.6 });
  add(gc, 'path', { d: paths.cw, fill: 'none', stroke: '#40d8d8', 'stroke-width': 1.6 });
  add(gc, 'path', { d: paths.cb, fill: '#55ffff' });
  add(gc, 'path', { d: paths.w, fill: 'none', stroke: '#ccc', 'stroke-width': 1.6 });

  function pts(groups) {
    var out = [];
    groups.forEach(function (g) {
      var m = g[0], a = g[1];
      for (var i = 0; i < a.length; i += 2) out.push(m(a[i], a[i + 1]));
    });
    return out;
  }
  function line(parent, points, color, w, dx, dy) {
    add(parent, 'polyline', {
      points: points.map(function (p) { return (p[0] + (dx || 0)).toFixed(1) + ',' + (p[1] + (dy || 0)).toFixed(1); }).join(' '),
      fill: 'none', stroke: color, 'stroke-width': w, 'stroke-linejoin': 'round'
    });
  }

  var ma60 = pts([
    [A,[19,605,61,600,103,595,149,587,191,582,275,575,317,568,359,560,401,555,443,548,485,538,527,530,577,528,615,520,657,514,699,507,741,498,783,488,825,480,867,472,909,462,951,455,993,448,1035,444,1140,443,1225,450,1291,458,1375,465,1440,466,1501,476]],
    [B,[0,180,30,180,60,188,100,200,158,207,200,217,240,228,290,240,350,254,400,265,450,275,510,286,555,291,640,296,720,302,800,313,890,316,970,318,1060,316,1105,322,1230,324,1300,328,1345,335,1400,345,1462,353,1568,373]],
    [R,[1200,372]],
    [C,[420,0,540,33,660,55,770,73,870,88,960,103,1040,120,1150,143,1240,155,1340,180,1400,193]]
  ]);
  var ma20 = pts([
    [A,[19,438,61,448,103,443,149,452,191,455,233,463,275,465,359,460,418,460,443,457,485,445,527,432,569,420,615,398,657,390,699,370,741,345,783,322,825,315,867,292,909,267,965,267,1035,280,1077,292,1124,305,1166,340,1208,365,1250,400,1291,440,1333,475,1375,505,1417,525,1459,560,1501,592,1543,630]],
    [B,[0,360,40,397,75,425,125,470,165,512,195,540,240,565,273,582,315,604,357,612,399,623,441,617,487,615,529,602,571,590,613,565,655,558,697,556,739,553,781,540,823,532,865,525,907,505,954,487,996,463,1038,448,1080,430,1122,418,1164,385,1206,365,1248,345,1290,333,1332,328,1374,320,1504,320,1546,320]],
    [R,[1123,331,1165,345,1212,365]],
    [C,[355,0,385,25,470,150,515,205,570,260,640,320,720,390,770,415,811,428,850,452,889,470,928,490,967,503,1006,513,1045,525,1085,525,1124,535,1163,530,1202,520,1243,515,1285,510,1324,500,1402,500]]
  ]);
  var ma10 = pts([
    [A,[19,533,61,533,103,515,149,490,191,470,233,465,275,455,317,440,359,416,401,404,443,380,485,350,527,344,569,344,615,328,657,312,699,285,741,260,783,243,825,222,867,207,909,182,951,195,993,200,1035,232,1077,280,1124,335,1166,420,1208,500,1250,590,1291,670,1333,750,1375,812,1417,860,1459,890,1501,910,1543,942]],
    [B,[0,638,70,638,105,628,147,620,189,618,231,612,273,612,315,615,357,608,399,603,441,598,487,585,529,577,571,558,613,513,655,508,697,512,739,493,781,462,823,452,865,448,907,425,954,400,996,378,1038,373,1080,350,1122,320,1164,270,1206,255,1248,238,1290,220,1332,220,1374,250,1416,268,1462,277,1504,285,1546,320,1568,350]],
    [C,[165,0,230,65,295,155,380,265,440,375,490,440,540,490,600,530,650,565,689,575,772,575,811,540,850,515,889,500,928,492,1006,490,1085,483,1163,490,1202,500,1243,513,1285,515,1324,510,1363,508,1402,503]]
  ]);
  var ma5 = pts([
    [A,[19,525,61,537,110,488,149,468,191,425,233,410,275,377,317,380,359,372,401,380,443,340,485,322,527,305,569,313,615,276,657,276,699,250,741,213,783,163,825,155,867,130,909,120,951,170,993,232,1035,312,1077,420,1124,540,1166,665,1208,770,1250,866,1291,915,1333,960,1375,965,1417,960,1459,932,1501,928,1543,925]],
    [B,[0,615,21,611,63,612,105,625,147,618,189,603,231,612,273,607,315,605,357,600,399,600,441,575,487,562,529,537,571,510,613,432,655,432,697,458,739,450,781,442,823,480,865,458,907,395,954,340,996,315,1038,265,1080,248,1122,240,1164,202,1206,197,1248,213,1290,193,1332,193,1374,290,1416,337,1462,342,1504,380,1546,445]],
    [C,[75,0,136,95,175,135,230,183,297,265,336,325,380,405,430,510,490,618,530,638,572,638,650,560,689,530,729,512,772,512,811,485,850,467,967,467,1006,495,1045,508,1085,500,1124,503,1163,512,1202,512,1243,515,1285,528,1324,505,1363,505,1402,503]]
  ]);
  var gm = document.getElementById('mas');
  line(gm, ma60, '#00c800', 2);
  line(gm, ma20, '#d000d0', 1.7);
  line(gm, ma10, '#c8c800', 1.7);
  line(gm, ma5, '#d0d0d0', 1.5);

  // lower pane: bars follow the curve
  var curve = pts([
    [M1,[10,272,50,272,75,250,105,215,149,192,181,205,213,213,278,205,344,214,376,212,409,197,442,207,477,218,510,225,543,208,575,183,608,178,641,185,674,205,707,213,740,228,770,275,805,335,838,395,872,430,905,467,938,485,971,492,1003,492,1036,465,1070,425,1102,380,1135,335,1168,312,1200,300,1233,280,1265,263,1300,260,1345,260,1365,252,1397,256,1425,248,1490,241,1530,248]],
    [M2,[0,232,30,213,65,212,95,195,128,160,160,165,195,228,225,243,258,240,292,222,325,220,358,190,393,170,425,162,460,158,490,170,520,185,555,178,590,180,620,195,655,218,690,250,720,290,752,330,787,325,820,317,853,325,885,355,918,375,952,385,1030,385,1060,393,1115,405,1150,415,1185,435,1215,480,1250,505,1285,507,1315,465,1348,385,1380,325,1415,280,1450,250,1480,232,1515,225,1545,192]],
    [R,[1461,1178,1502,1196,1543,1196,1585,1199,1626,1196,1660,1193]]
  ]);
  function valueAt(x) {
    for (var i = 1; i < curve.length; i++) {
      if (x <= curve[i][0]) {
        var a = curve[i - 1], b = curve[i];
        return a[1] + (b[1] - a[1]) * (x - a[0]) / (b[0] - a[0]);
      }
    }
    return 1195;
  }
  var gb = document.getElementById('macd');
  xs.forEach(function (x) {
    var v = valueAt(x);
    if (Math.abs(v - 1195) < 0.5) return;
    add(gb, 'rect', {
      x: (x - 4).toFixed(1), y: Math.min(v, 1195).toFixed(1), width: 8,
      height: Math.abs(v - 1195).toFixed(1), fill: v < 1195 ? '#ff0000' : '#00ff00'
    });
  });
  var gl = document.getElementById('macd-lines');
  line(gl, curve, '#00c000', 1.8);
  line(gl, curve, '#d800d8', 1.4, 4, 1);

  // signal columns
  var gs = document.getElementById('signals');
  [36.7, 249.3, 778.8, 884, 900.4, 930.3, 975.7].forEach(function (x) {
    [[1142, 13, '#00e000'], [1155, 12, '#f0f000'], [1167, 14, '#20f0f0'], [1181, 14, '#0000e0']].forEach(function (s) {
      add(gs, 'rect', { x: (x - 4).toFixed(1), y: s[0], width: 8, height: s[1], fill: s[2] });
    });
  });
  function arrowUp(x, top, bot) {
    add(gs, 'path', { d: 'M' + (x - 7) + ' ' + (top + 10) + 'L' + x + ' ' + top + 'L' + (x + 7) + ' ' + (top + 10) + 'H' + (x + 1.2) + 'V' + bot + 'H' + (x - 1.2) + 'V' + (top + 10) + 'Z', fill: '#f01010' });
  }
  function arrowDown(x, top, bot) {
    add(gs, 'path', { d: 'M' + (x - 7) + ' ' + (bot - 10) + 'L' + x + ' ' + bot + 'L' + (x + 7) + ' ' + (bot - 10) + 'H' + (x + 1.2) + 'V' + top + 'H' + (x - 1.2) + 'V' + (bot - 10) + 'Z', fill: '#10c010' });
  }
  [[M1,78,245,302],[M1,245,215,270],[M1,375,215,270],[M1,542,215,270],[M1,1002,495,516],[M1,1365,255,312],[M1,1430,255,307],[M1,1558,240,295],
   [M2,258,243,297],[M2,555,185,240],[M2,787,328,383],[M2,983,392,447],[M2,1312,467,516]].forEach(function (a) {
    var p = a[0](a[1], a[2]), q = a[0](a[1], a[3]);
    arrowUp(+p[0].toFixed(1), +p[1].toFixed(1), +q[1].toFixed(1));
  });
  [[1535,1197,1213],[1579,1201,1219],[1626,1198,1217]].forEach(function (a) { arrowUp(a[0], a[1], a[2]); });
  [[M1,32,272,330],[M1,180,205,262],[M1,310,215,272],[M1,440,213,265],[M1,640,190,245],[M1,1332,265,320],[M1,1397,260,317],[M1,1528,250,307],
   [M2,160,165,222],[M2,490,172,227],[M2,620,200,252],[M2,852,330,385],[M2,1048,395,452]].forEach(function (a) {
    var p = a[0](a[1], a[2]), q = a[0](a[1], a[3]);
    arrowDown(+p[0].toFixed(1), +p[1].toFixed(1), +q[1].toFixed(1));
  });
  [[1550,1199,1217],[1596,1201,1219]].forEach(function (a) { arrowDown(a[0], a[1], a[2]); });
})();
```
